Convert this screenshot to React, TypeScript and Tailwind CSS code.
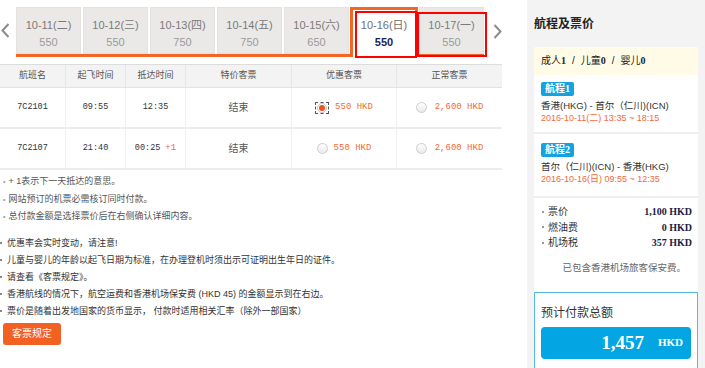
import React from 'react';

const sans = "font-['Liberation_Sans','Noto_Sans_CJK_SC',sans-serif]";
const mono = "font-['Liberation_Mono','Noto_Sans_CJK_SC',monospace]";
const serif = "font-['Liberation_Serif','Noto_Sans_CJK_SC',serif]";

const dates = [
    { d: '10-11(二)', p: '550' },
    { d: '10-12(三)', p: '550' },
    { d: '10-13(四)', p: '750' },
    { d: '10-14(五)', p: '750' },
    { d: '10-15(六)', p: '650' },
    { d: '10-16(日)', p: '550', active: true },
    { d: '10-17(一)', p: '550', marked: true },
];

const flights = [
    { no: '7C2101', dep: '09:55', arr: '12:35', plus: false, picked: true },
    { no: '7C2107', dep: '21:40', arr: '00:25', plus: true, picked: false },
];

const cols = ['w-[66px]', 'w-[60px]', 'w-[60px]', 'w-[106px]', 'w-[105px]', 'w-[105px]'];

const Chevron = ({ dir }: { dir: 'l' | 'r' }) => (
    <svg width="9" height="15" viewBox="0 0 9 15">
        <path
            d={dir === 'l' ? 'M7.5 1 L1.5 7.5 L7.5 14' : 'M1.5 1 L7.5 7.5 L1.5 14'}
            fill="none"
            stroke="#8c8c8c"
            strokeWidth="2"
        />
    </svg>
);

const DateStrip = () => (
    <div className="flex h-[64px] items-start">
        <div className="w-[16px] pl-[1px] pt-[23px]">
            <Chevron dir="l" />
        </div>
        <div className="mt-[7px] flex items-start gap-[2px] border-b-[3px] border-[#f26522]">
            {dates.map(t =>
                t.active ? (
                    <div
                        key={t.d}
                        className="relative -mx-[1px] -mb-[3px] flex h-[50px] w-[68px] flex-col items-center border-[3px] border-b-0 border-[#f26522] bg-white pt-[8px]"
                    >
                        <span className={`${sans} text-[11px] leading-[14px] text-[#6f6f6f]`}>{t.d}</span>
                        <span className={`${sans} mt-[3px] text-[11px] font-bold leading-[14px] text-[#1d1d5a]`}>{t.p}</span>
                        <span className="absolute left-[2px] top-[1px] h-[47px] w-[62px] border-2 border-[#ff0000]" />
                    </div>
                ) : (
                    <div
                        key={t.d}
                        className="relative flex h-[47px] w-[65px] flex-col items-center border border-[#e4e2e1] bg-[#ebe9e8] pt-[10px]"
                    >
                        <span className={`${sans} text-[11px] leading-[14px] text-[#7a7a7a]`}>{t.d}</span>
                        <span className={`${sans} mt-[3px] text-[11px] leading-[14px] text-[#9a9a9a]`}>{t.p}</span>
                        {t.marked && (
                            <span className="absolute -left-[3px] top-[4px] z-10 h-[45px] w-[70px] border-2 border-[#ff0000]" />
                        )}
                    </div>
                )
            )}
        </div>
        <div className="pl-[9px] pt-[24px]">
            <Chevron dir="r" />
        </div>
    </div>
);

const Radio = ({ on }: { on?: boolean }) =>
    on ? (
        <span className="flex h-[12px] w-[14px] items-center justify-center border border-dashed border-[#555]">
            <span className="flex h-[10px] w-[10px] items-center justify-center rounded-full border border-[#c4c4c4] bg-white">
                <span className="h-[6px] w-[6px] rounded-full bg-[#f0531f]" />
            </span>
        </span>
    ) : (
        <span className="h-[11px] w-[11px] rounded-full border border-[#cdcdcd] bg-gradient-to-b from-white to-[#e9e9e9]" />
    );

const FlightTable = () => {
    const head = ['航班名', '起飞时间', '抵达时间', '特价客票', '优惠客票', '正常客票'];
    return (
        <div className="w-[502px] border-t border-[#dcdcdc]">
            <div className="flex h-[23px] border-b border-[#e2e2e2] bg-[#f3f3f3]">
                {head.map((h, i) => (
                    <div
                        key={h}
                        className={`${cols[i]} flex items-center justify-center text-[9px] text-[#555] ${i < 5 ? 'border-r border-[#e6e6e6]' : ''}`}
                    >
                        {h}
                    </div>
                ))}
            </div>
            {flights.map(f => (
                <div key={f.no} className="flex h-[41px] border-b-2 border-[#ececec] text-[#333]">
                    <div className={`${cols[0]} ${mono} flex items-center justify-center border-r border-[#f0f0f0] text-[8.5px]`}>{f.no}</div>
                    <div className={`${cols[1]} ${mono} flex items-center justify-center border-r border-[#f0f0f0] text-[8.5px]`}>{f.dep}</div>
                    <div className={`${cols[2]} ${mono} flex items-center justify-center border-r border-[#f0f0f0] text-[8.5px]`}>
                        {f.arr}
                        {f.plus && <span className="ml-[5px] text-[9px] text-[#f26a3c]">+1</span>}
                    </div>
                    <div className={`${cols[3]} flex items-center justify-center border-r border-[#f0f0f0] text-[10px] text-[#555]`}>结束</div>
                    <div className={`${cols[4]} flex items-center justify-center gap-[6px] border-r border-[#f0f0f0]`}>
                        <Radio on={f.picked} />
                        <span className={`${mono} text-[9px] text-[#f26a3c]`}>550 HKD</span>
                    </div>
                    <div className={`${cols[5]} flex items-center justify-center gap-[8px]`}>
                        <Radio />
                        <span className={`${mono} text-[9px] text-[#f26a3c]`}>2,600 HKD</span>
                    </div>
                </div>
            ))}
        </div>
    );
};

const tips = [
    '+ 1表示下一天抵达的意思。',
    '网站预订的机票必需核订同时付款。',
    '总付款金额是选择票价后在右侧确认详细内容。',
];

const rules = [
    '优惠率会实时变动，请注意!',
    '儿童与婴儿的年龄以起飞日期为标准，在办理登机时须出示可证明出生年日的证件。',
    '请查看《客票规定》。',
    '香港航线的情况下，航空运费和香港机场保安费 (HKD 45) 的金额显示到在右边。',
    '票价是随着出发地国家的货币显示， 付款时适用相关汇率（除外一部国家）',
];

const Notes = () => (
    <div className="pt-[3px]">
        <ul className="pl-[3px] text-[9px] leading-[17.5px] text-[#555]">
            {tips.map(t => (
                <li key={t} className="flex items-center gap-[3px]">
                    <span className="text-[7px] text-[#999]">•</span>
                    <span>{t}</span>
                </li>
            ))}
        </ul>
        <ul className="mt-[9px] text-[9px] leading-[17px] text-[#333]">
            {rules.map(t => (
                <li key={t} className="flex items-center gap-[5px]">
                    <span className="h-[2px] w-[2px] bg-[#888]" />
                    <span>{t}</span>
                </li>
            ))}
        </ul>
        <button className="ml-[3px] mt-[3px] h-[22px] w-[58px] rounded-[3px] bg-[#f26122] text-[10px] text-white">客票规定</button>
    </div>
);

const Leg = ({ n, route, time, pad }: { n: number; route: string; time: string; pad: string }) => (
    <div className={`border-b-2 border-[#efefef] px-[7px] ${pad}`}>
        <div className="flex h-[14px] w-fit items-center rounded-[2px] bg-[#13a3e0] px-[4px] text-[10px] font-bold leading-[14px] text-white">
            航程<span className={serif}>{n}</span>
        </div>
        <div className="mt-[4px] text-[9.5px] leading-[12px] text-[#333]">{route}</div>
        <div className={`${sans} text-[9px] leading-[13px] text-[#f26a3c]`}>{time}</div>
    </div>
);

const fees = [
    { k: '票价', v: '1,100' },
    { k: '燃油费', v: '0' },
    { k: '机场税', v: '357' },
];

const Summary = () => (
    <div className="flex-1 bg-[#f3f3f3] px-[7px]">
        <div className="h-[47px] pt-[15px] text-[12px] font-bold leading-[18px] text-[#222]">航程及票价</div>
        <div className="h-[28px] bg-[#fffbe7] pl-[7px] text-[10px] leading-[28px] text-[#222]">
            成人<b className={serif}>1</b>
            <span className="mx-[6px]">/</span>儿童<b className={serif}>0</b>
            <span className="mx-[6px]">/</span>婴儿<b className={serif}>0</b>
        </div>
        <div className="bg-white">
            <Leg n={1} route="香港(HKG) - 首尔（仁川)(ICN)" time="2016-10-11(二) 13:35 ~ 18:15" pad="pt-[7px] pb-[7px]" />
            <Leg n={2} route="首尔（仁川)(ICN) - 香港(HKG)" time="2016-10-16(日) 09:55 ~ 12:35" pad="pt-[9px] pb-[10px]" />
            <div className="pl-[8px] pr-[6px] pt-[6px]">
                {fees.map(f => (
                    <div key={f.k} className="flex h-[15.5px] items-center justify-between text-[10px] leading-[15px]">
                        <span className="flex items-center gap-[4px] text-[#333]">
                            <span className="h-[2px] w-[2px] bg-[#999]" />
                            {f.k}
                        </span>
                        <span className={`${serif} font-bold text-[#1b1b45]`}>{f.v} HKD</span>
                    </div>
                ))}
            </div>
            <div className="mt-[10px] pb-[17px] pr-[12px] text-right text-[9.5px] leading-[14px] text-[#666]">已包含香港机场旅客保安费。</div>
        </div>
        <div className="h-[90px] border border-[#55b8e6] bg-white px-[6px] pt-[12px]">
            <div className="text-[12px] leading-[16px] text-[#333]">预计付款总额</div>
            <div className={`${serif} mt-[6px] flex h-[32px] items-center justify-end gap-[14px] rounded-[4px] bg-[#03a6e2] pr-[8px] font-bold leading-none text-white`}>
                <span className="text-[19px]">1,457</span>
                <span className="text-[11px]">HKD</span>
            </div>
        </div>
    </div>
);

export default function App() {
    return (
        <div className={`flex h-[368px] w-[705px] overflow-hidden bg-white text-[#333] ${sans}`}>
            <div className="w-[527px] shrink-0">
                <DateStrip />
                <FlightTable />
                <Notes />
            </div>
            <Summary />
        </div>
    );
}
